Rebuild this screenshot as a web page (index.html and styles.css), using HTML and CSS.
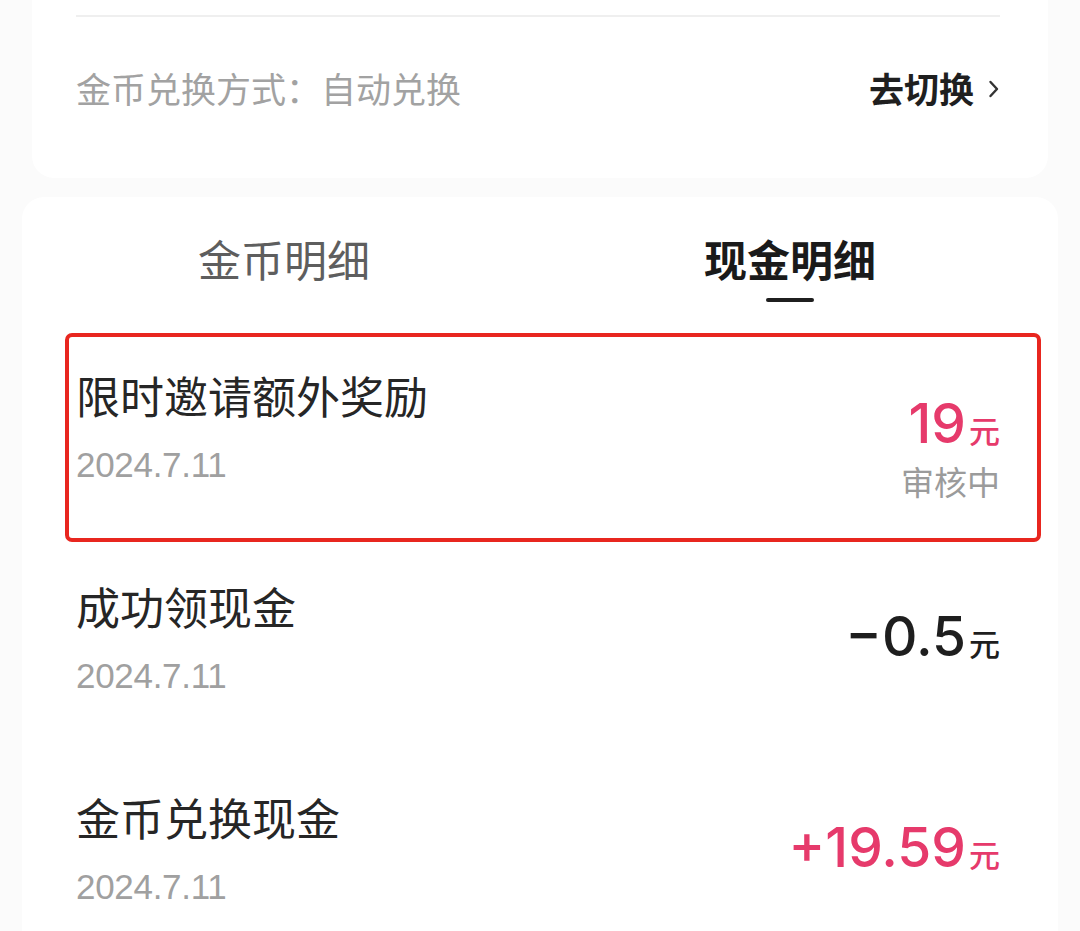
FILE: index.html
```html
<!DOCTYPE html>
<html lang="zh-CN">
<head>
<meta charset="utf-8">
<title>现金明细</title>
<link rel="stylesheet" href="styles.css">
</head>
<body>
  <section class="card card-top">
    <div class="divider"></div>
    <div class="mode-row">
      <span class="mode-label">金币兑换方式：自动兑换</span>
      <span class="mode-link">去切换<svg class="chev" width="12" height="20" viewBox="0 0 12 20"><path d="M2.5 3 L9 10 L2.5 17" fill="none" stroke="#333" stroke-width="2.4" stroke-linecap="round" stroke-linejoin="round"/></svg></span>
    </div>
  </section>

  <section class="card card-detail">
    <div class="tabs">
      <div class="tab"><span class="tab-text">金币明细</span><span class="tab-bar"></span></div>
      <div class="tab active"><span class="tab-text">现金明细</span><span class="tab-bar"></span></div>
    </div>

    <div class="list">
      <div class="annotation"></div>
      <div class="row">
        <div class="info">
          <div class="title">限时邀请额外奖励</div>
          <div class="date">2024.7.11</div>
        </div>
        <div class="amount-col pending">
          <div class="amount pink">19<span class="unit">元</span></div>
          <div class="status">审核中</div>
        </div>
      </div>
      <div class="row">
        <div class="info">
          <div class="title">成功领现金</div>
          <div class="date">2024.7.11</div>
        </div>
        <div class="amount-col">
          <div class="amount dark">−0.5<span class="unit">元</span></div>
        </div>
      </div>
      <div class="row">
        <div class="info">
          <div class="title">金币兑换现金</div>
          <div class="date">2024.7.11</div>
        </div>
        <div class="amount-col">
          <div class="amount pink">+19.59<span class="unit">元</span></div>
        </div>
      </div>
    </div>
  </section>
</body>
</html>
```
FILE: styles.css
```css
* { box-sizing: border-box; }

html, body {
  margin: 0;
  padding: 0;
}

body {
  width: 1080px;
  height: 931px;
  overflow: hidden;
  background: #fbfbfb;
  font-family: "Liberation Sans", "Noto Sans CJK SC", sans-serif;
  color: #222;
}

.card {
  background: #ffffff;
  border-radius: 22px;
}

.card-top {
  margin: 0 32px;
  padding: 15px 48px 14px 44px;
  border-top-left-radius: 0;
  border-top-right-radius: 0;
}

.divider {
  height: 2px;
  background: #efefef;
}

.mode-row {
  height: 147px;
  padding-bottom: 6px;
  display: flex;
  align-items: center;
  justify-content: space-between;
}

.mode-label {
  font-family: "Noto Sans CJK SC", sans-serif;
  font-size: 35px;
  line-height: 44px;
  color: #a2a2a2;
}

.mode-link {
  display: flex;
  align-items: center;
  font-family: "Noto Sans CJK SC", sans-serif;
  font-size: 35px;
  line-height: 44px;
  font-weight: 700;
  color: #1f1f1f;
}

.chev {
  margin-left: 14px;
  margin-top: 2px;
}

.card-detail {
  margin: 19px 22px 0;
  padding-top: 35px;
  min-height: 760px;
}

.tabs {
  display: grid;
  grid-template-columns: 1fr 1fr;
}

.tab {
  display: flex;
  flex-direction: column;
  align-items: center;
}

.tab:first-child { padding-left: 6px; }
.tab:last-child { padding-right: 18px; }

.tab-text {
  font-family: "Noto Sans CJK SC", sans-serif;
  font-size: 43px;
  line-height: 52px;
  color: #5e5e5e;
}

.tab-bar {
  width: 48px;
  height: 4px;
  margin-top: 14px;
  border-radius: 2px;
  background: transparent;
}

.tab.active .tab-text {
  font-weight: 700;
  color: #1a1a1a;
}

.tab.active .tab-bar {
  background: #1f1f1f;
}

.list {
  position: relative;
  margin-top: 31px;
}

.annotation {
  position: absolute;
  left: 43px;
  top: 0;
  width: 976px;
  height: 209px;
  border: 4px solid #e8261f;
  border-radius: 7px;
  pointer-events: none;
}

.row {
  height: 211px;
  display: flex;
  justify-content: space-between;
  padding: 36px 58px 56px 54px;
}

.title {
  font-family: "Noto Sans CJK SC", sans-serif;
  font-size: 44px;
  line-height: 53px;
  color: #262626;
}

.date {
  margin-top: 21px;
  font-size: 35px;
  line-height: 44px;
  letter-spacing: -0.3px;
  color: #a0a0a0;
}

.amount-col {
  align-self: center;
  text-align: right;
}

.amount-col.pending {
  margin-top: 40px;
}

.amount {
  font-family: "Inter", "Noto Sans CJK SC", sans-serif;
  font-weight: 500;
  font-size: 55px;
  line-height: 54px;
  white-space: nowrap;
}

.amount.pink { color: #e63a6b; }
.amount.dark { color: #1e1e1e; }

.unit {
  font-family: "Noto Sans CJK SC", sans-serif;
  font-weight: 500;
  font-size: 31px;
  margin-left: 3px;
}

.status {
  margin-top: 4px;
  font-family: "Noto Sans CJK SC", sans-serif;
  font-size: 33px;
  line-height: 40px;
  color: #9b9b9b;
}
```
